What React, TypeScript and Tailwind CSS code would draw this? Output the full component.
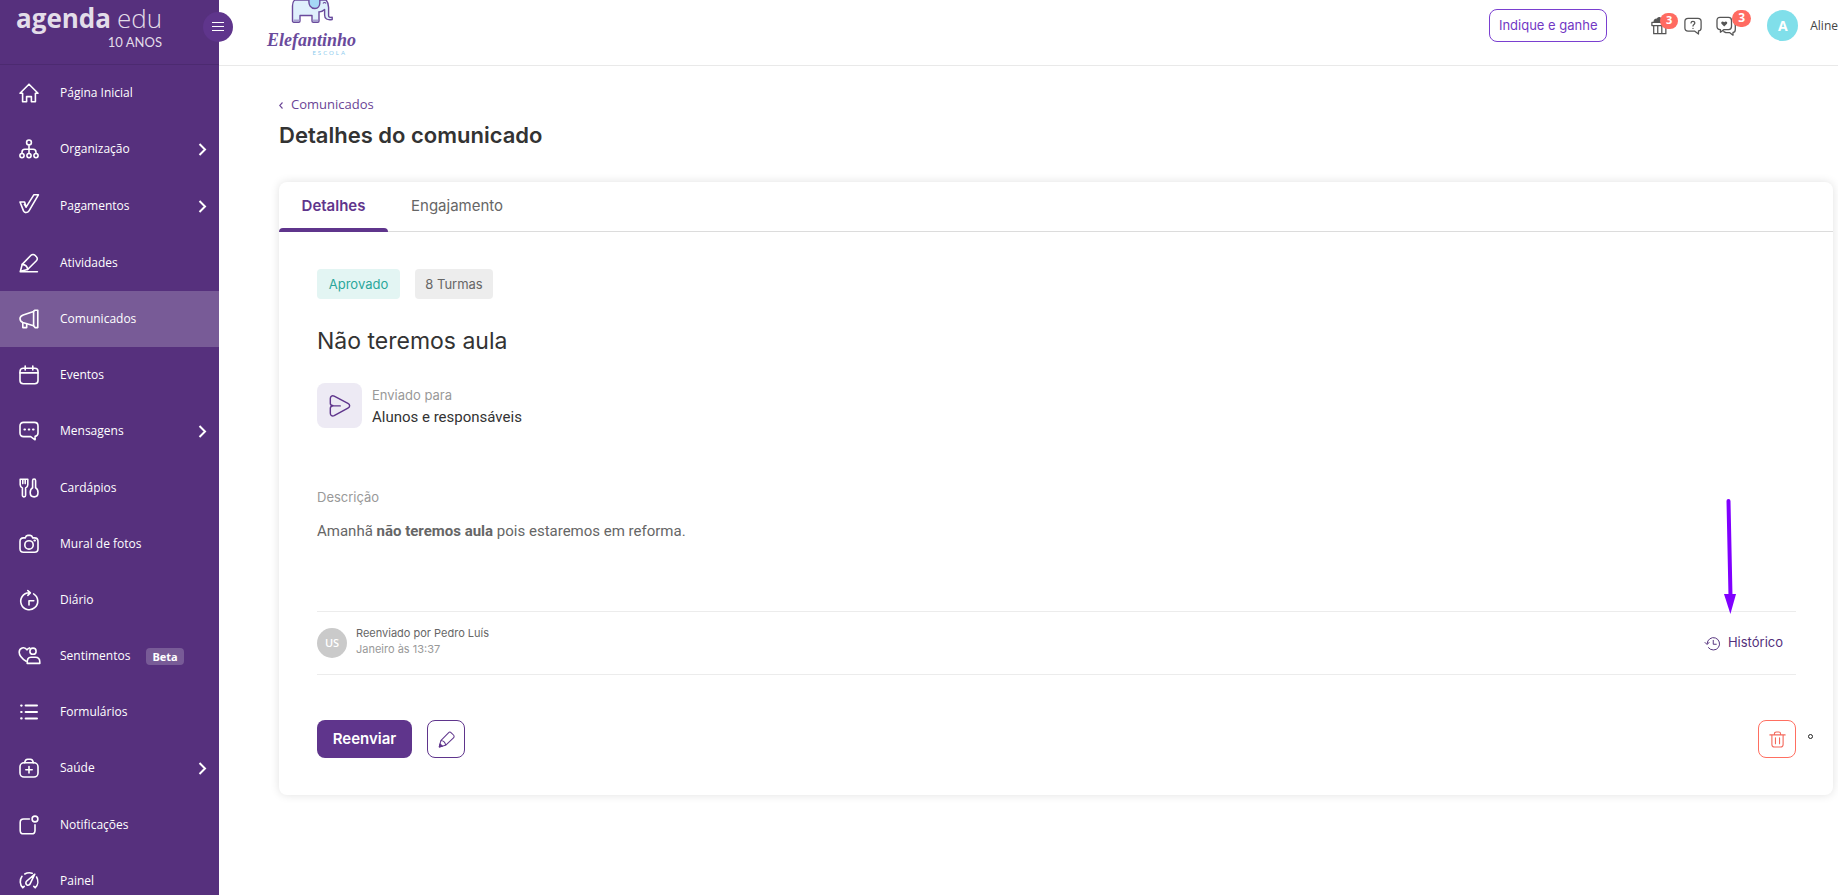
import type { ReactNode } from 'react';

type NavItem = {
  label: string;
  icon: ReactNode;
  hasChildren?: boolean;
  active?: boolean;
  badge?: string;
};

const navItems: NavItem[] = [
  {
    label: 'Página Inicial',
    icon: <path d="M1 10.2 10 1.2l9 9h-2.6v8.6h-4v-5.2H7.6v5.2h-4v-8.6H1Z" />,
  },
  {
    label: 'Organização',
    hasChildren: true,
    icon: (
      <>
        <circle cx="10" cy="3.4" r="2.4" />
        <circle cx="3" cy="16.6" r="2.1" />
        <circle cx="10" cy="16.6" r="2.1" />
        <circle cx="17" cy="16.6" r="2.1" />
        <path d="M10 5.8v8.7M3 14.5v-1.3c0-1.8 1-2.9 2.9-2.9h8.2c1.9 0 2.9 1.1 2.9 2.9v1.3" />
      </>
    ),
  },
  {
    label: 'Pagamentos',
    hasChildren: true,
    icon: <path d="M1 6h4.600l1.500 5.200L14.800-1.200h4.600L10 14.800c-1.400 2.300-4.500 2.400-5.500.1L1 6ZM7.100 11.200 5.400 8.400" />,
  },
  {
    label: 'Atividades',
    icon: (
      <>
        <path d="M1.2 18.800h17.2M1.4 18.300l1.800-6.900 8.800-9.100c1.2-1.2 2.900-1.1 4 0l1.4 1.4c1.2 1.2 1.2 2.800 0 4l-8.800 8.800-7.200 1.800Z" />
        <path d="M3.200 11.400c3.200.2 5.200 2.200 5.400 5.100" />
      </>
    ),
  },
  {
    label: 'Comunicados',
    active: true,
    icon: (
      <>
        <path d="M14.6 2.4 4.2 6.1C2.2 6.8 1 7.7 1 9.600c0 1.700.9 3.200 2.800 3.900l10.800 3.200V2.400Z" />
        <path d="M14.6 2.400 16 1.200h2.800v17.400H16l-1.400-1.900M3.800 13.600v5h3.900v-3.800" />
      </>
    ),
  },
  {
    label: 'Eventos',
    icon: (
      <>
        <rect x="1" y="3.2" width="18" height="15.6" rx="3.2" />
        <path d="M1 7.9h18M6.2 1v4M13.8 1v4" />
      </>
    ),
  },
  {
    label: 'Mensagens',
    hasChildren: true,
    icon: (
      <>
        <path d="M4.6 1.4h10.8c2.4 0 3.6 1.3 3.6 3.6v7c0 1.7-1 3.1-2.9 3.400v3.400l-4.400-3.200H4.600C2.200 15.600 1 14.300 1 12V5c0-2.300 1.200-3.600 3.600-3.600Z" />
        <path d="M5.400 8.600h.6M9.700 8.600h.6M14 8.600h.6" strokeWidth="2" />
      </>
    ),
  },
  {
    label: 'Cardápios',
    icon: (
      <>
        <path d="M1.200 1.200h7.600v5.500c0 1.600-.8 2.600-2.200 3.200v7.300c0 2.200-3.200 2.200-3.200 0V9.900C2 9.300 1.200 8.300 1.200 6.700V1.200ZM3.800 1.200v4.400M6.200 1.200v4.400" />
        <path d="M13.600 2.700c0-2.200 3-2.200 3 0v7.100c1.500.9 2.400 2.700 2.400 4.700 0 2.700-1.600 4.400-3.900 4.400s-3.900-1.700-3.900-4.400c0-2 .9-3.800 2.400-4.700V2.700Z" />
      </>
    ),
  },
  {
    label: 'Mural de fotos',
    icon: (
      <>
        <path d="M6.200 3.900c.5-1.500 1.300-2.500 2.600-2.500h2.400c1.300 0 2.100 1 2.600 2.500h1.700C17.800 3.900 19 5.300 19 7.400v7.400c0 2.200-1.200 3.500-3.500 3.500h-11C2.200 18.300 1 17 1 14.800V7.400c0-2.100 1.200-3.500 3.500-3.500h1.700Z" />
        <circle cx="10" cy="10.900" r="4.200" />
        <path d="M15.400 6.600h.6" strokeWidth="2" />
      </>
    ),
  },
  {
    label: 'Diário',
    icon: (
      <>
        <path d="M14.600 3.900a8.500 8.500 0 1 1-4.600-1.200h1M8.800.6l2.600 2.200-2.600 2.500" />
        <path d="M10 15v-4.300h4.800" />
      </>
    ),
  },
  {
    label: 'Sentimentos',
    badge: 'Beta',
    icon: (
      <>
        <path d="M7.200 15.300C2.500 12.400.2 9.600.2 6.300c0-4.400 5.300-6.400 7.800-2.400.7-1.100 1.500-1.700 2.600-2" />
        <circle cx="14" cy="5.200" r="3.100" />
        <path d="M8.200 17.400c-.2-4.200 1-6.200 3.700-6.200h4.500c2.900 0 4.400 1.600 4.400 4.700v1.500H8.200Z" />
      </>
    ),
  },
  {
    label: 'Formulários',
    icon: (
      <>
        <path d="M6.600 3.600H18M6.600 10H18M6.600 16.400H18" strokeWidth="2" />
        <path d="M2.200 3.600h.4M2.200 10h.4M2.200 16.400h.4" strokeWidth="2.200" />
      </>
    ),
  },
  {
    label: 'Saúde',
    hasChildren: true,
    icon: (
      <>
        <rect x="1" y="4.800" width="18" height="14.200" rx="4" />
        <path d="M5.600 4.800c.4-2.400 1.400-3.600 3-3.600h2.800c1.600 0 2.600 1.200 3 3.600M10 8.600V15M6.800 11.800h6.400" />
      </>
    ),
  },
  {
    label: 'Notificações',
    icon: (
      <>
        <path d="M10.400 4H4.600C2.400 4 1.200 5.200 1.200 7.400v8c0 2.200 1.200 3.400 3.400 3.400h8c2.200 0 3.400-1.200 3.400-3.400V9.800" />
        <circle cx="16" cy="4" r="2.900" />
      </>
    ),
  },
  {
    label: 'Painel',
    icon: (
      <>
        <path d="M3.800 16.800A8.900 8.900 0 0 1 3 5.300M5.800 3a9 9 0 0 1 7.400-.8M17.600 6a8.900 8.900 0 0 1-1.400 10.800M3.800 16.800l1.400-1.400M16.200 16.800l-1.400-1.400" />
        <path d="M15.800 3.200 7.800 10c-1.400 1.400-1.200 3 0 3.800 1.200.8 2.700.4 3.400-1.200l4.600-9.400Z" />
      </>
    ),
  },
];

function Icon({ size = 20, stroke = 1.6, children }: { size?: number; stroke?: number; children: ReactNode }) {
  return (
    <svg
      width={size}
      height={size}
      viewBox="0 0 20 20"
      fill="none"
      stroke="currentColor"
      strokeWidth={stroke}
      strokeLinecap="round"
      strokeLinejoin="round"
      className="shrink-0 overflow-visible"
      aria-hidden="true"
    >
      {children}
    </svg>
  );
}

function Sidebar() {
  return (
    <aside className="relative z-10 w-[219px] shrink-0 bg-[#56307d] text-white">
      <div className="flex h-[65px] flex-col border-b border-[#4c2a70] pl-4">
        <a href="#" className="flex w-[146px] flex-col text-[#e3dde9]">
          <span className="flex items-baseline justify-between font-['Open_Sans',sans-serif] text-[26px] leading-9">
            <span className="font-bold">agenda</span>
            <span className="font-light">edu</span>
          </span>
          <span className="text-right font-[Lato,sans-serif] text-[13px] leading-3">10 ANOS</span>
        </a>
      </div>
      <button
        type="button"
        aria-label="Menu"
        className="absolute top-3 -right-3.5 flex size-[30px] items-center justify-center rounded-full bg-[#5f358c]"
      >
        <svg width="12" height="10" viewBox="0 0 12 10" stroke="white" strokeWidth="1.200">
          <path d="M0 .5h12M0 4.500h12M0 8.500h12" />
        </svg>
      </button>
      <nav>
        <ul>
          {navItems.map((item) => (
            <li key={item.label} className={item.hasChildren ? 'pb-px' : ''}>
              <a
                href="#"
                className={`flex h-14 items-center pr-3 pl-[19px] font-['Open_Sans',sans-serif] text-xs ${item.active ? 'bg-[#785b97]' : ''}`}
              >
                <Icon>{item.icon}</Icon>
                <span className="ml-[21px]">{item.label}</span>
                {item.badge && (
                  <span className="ml-4 rounded bg-[#785b97] px-1.5 text-[11px] leading-[17px] font-bold">{item.badge}</span>
                )}
                {item.hasChildren && (
                  <svg width="9" height="13" viewBox="0 0 9 13" fill="none" stroke="currentColor" strokeWidth="2" className="ml-auto">
                    <path d="m1.500 1 5.500 5.500L1.500 12" />
                  </svg>
                )}
              </a>
            </li>
          ))}
        </ul>
      </nav>
    </aside>
  );
}

function SchoolLogo() {
  return (
    <a href="#" className="flex w-[88px] flex-col items-center pl-px">
      <svg width="42" height="24" viewBox="0 0 42 24" fill="none" stroke="#6a4a9c" strokeWidth="1.400" strokeLinejoin="round" aria-hidden="true">
        <path
          d="M1.500 21V6c0-3 .8-5 2.500-6h31c2 2 2.700 5 2.600 8v7.500c0 1.800 1 2 3.600 1.800v2.200c-5 .8-7.600-.6-7.600-4.500V9.500C32 11 30 12 28 11.800V21c0 .7-.5 1.200-1.200 1.200h-4.600c-.7 0-1.200-.5-1.200-1.200v-5.500H9V21c0 .7-.5 1.200-1.200 1.200H2.700c-.7 0-1.200-.5-1.200-1.200Z"
          fill="#dff0fc"
        />
        <path d="M18 0c-.6 5 1.600 8.500 6 8.500 3 0 4.800-2.500 4.800-5.500V0" fill="#a5d8f6" />
        <path d="M32 3.600c.8-1.500 2.200-1.500 3 0" strokeWidth="1.100" />
        <path d="M2.500 20.300h6M22 20.300h5" stroke="#a99fd0" />
      </svg>
      <span className="mt-1.5 font-['Liberation_Serif',serif] text-lg leading-5 font-bold text-[#6a4a9c] italic">Elefantinho</span>
      <span className="mr-2 self-end font-[Lato,sans-serif] text-[6px] leading-[6px] tracking-[2px] text-[#8ccbee]">ESCOLA</span>
    </a>
  );
}

function CountBadge({ children }: { children: ReactNode }) {
  return (
    <span className="absolute -top-1 left-[9px] flex h-4 w-[18px] items-center justify-center rounded-full bg-[#ff6b61] font-['Open_Sans',sans-serif] text-[11px] font-bold text-white">
      {children}
    </span>
  );
}

function TopBar() {
  return (
    <header className="flex h-[66px] items-start justify-between border-b border-[#e9e9e9] pl-12">
      <SchoolLogo />
      <div className="flex h-[51px] items-center">
        <button
          type="button"
          className="h-[33px] w-[118px] rounded-lg border border-[#7a3fd0] font-[Inter,sans-serif] text-[13px] text-[#7237c4]"
        >
          Indique e ganhe
        </button>
        <button type="button" aria-label="Presentes" className="relative ml-11 text-[#555]">
          <Icon size={18} stroke={1.400}>
            <path d="M1 6h17v3.500H1zM3 9.500h13.500v9H3zM7.500 9.500v9M12 9.500v9" />
            <path d="M3.500 6C3 3.500 5 2 7 2.500 8-.2 11 .5 11.300 3L14 6Z" fill="currentColor" />
          </Icon>
          <CountBadge>3</CountBadge>
        </button>
        <button type="button" aria-label="Ajuda" className="ml-[15px] text-[#555]">
          <Icon size={18} stroke={1.400}>
            <path d="M4.500 1.400h11c2.300 0 3.500 1.200 3.500 3.500v7.200c0 2-1 3.200-2.900 3.400v3.400l-4.500-3.300H4.500C2.200 15.600 1 14.400 1 12.100V4.900c0-2.300 1.200-3.500 3.500-3.500Z" />
            <path d="M7.800 6.600C8 4.200 12.100 4.300 12 6.800c0 1.600-2 1.500-2 3.200M10 12.600v.1" />
          </Icon>
        </button>
        <button type="button" aria-label="Conversas" className="relative ml-3.5 text-[#555]">
          <Icon size={20} stroke={1.300}>
            <path d="M4 1.400h8.500c2 0 3 1 3 3v6.200c0 2-1 3-3 3H8l-3.600 2.600v-2.600C2 13.600 1 12.600 1 10.600V4.400c0-2 1-3 3-3Z" />
            <path d="M18 6.500c1 .7 1.300 1.600 1.300 3v4c0 1.900-.8 2.900-2.300 3v2.700l-3.500-2.600H9.800l-2-1" />
            <path d="M8.200 10.400 5.500 7.700c-1-1.300.8-3.300 2.700-1.500 1.900-1.800 3.800.2 2.800 1.500l-2.800 2.700Z" fill="currentColor" stroke="none" />
          </Icon>
          <span className="absolute -top-1.5 left-4 flex h-[17px] w-[19px] items-center justify-center rounded-full bg-[#ff6b61] font-['Open_Sans',sans-serif] text-xs font-bold text-white">
            3
          </span>
        </button>
        <a href="#" className="ml-[31px] flex items-center gap-3">
          <span className="flex size-[31px] items-center justify-center rounded-full bg-[#80dfea] font-['Open_Sans',sans-serif] text-sm font-bold text-white">
            A
          </span>
          <span className="font-['Open_Sans',sans-serif] text-xs text-[#444]">Aline</span>
        </a>
      </div>
    </header>
  );
}

export default function App() {
  return (
    <div className="flex h-screen overflow-hidden bg-white">
      <Sidebar />
      <div className="min-w-0 flex-1">
        <TopBar />
        <main className="pt-[29px] pr-[5px] pl-[60px]">
          <a href="#" className="flex h-5 w-fit items-center gap-2 font-['Open_Sans',sans-serif] text-[13px] text-[#6a4496]">
            <svg width="4" height="7" viewBox="0 0 4 7" fill="none" stroke="currentColor" strokeWidth="1.100">
              <path d="M3.500.5.700 3.500l2.800 3" />
            </svg>
            Comunicados
          </a>
          <h1 className="mt-1 font-[Inter,sans-serif] text-[22px] leading-8 font-semibold text-[#333]">Detalhes do comunicado</h1>

          <section className="relative mt-[31px] rounded-lg bg-white shadow-[0_0_10px_rgba(0,0,0,0.12)]">
            <div role="tablist" className="flex h-[50px] border-b border-[#dcdcdc] font-[Inter,sans-serif] text-[15px]">
              <button
                type="button"
                role="tab"
                aria-selected="true"
                className="relative w-[109px] font-semibold text-[#5f358c]"
              >
                Detalhes
                <span className="absolute inset-x-0 -bottom-px h-1 rounded-t bg-[#5f358c]" />
              </button>
              <button type="button" role="tab" aria-selected="false" className="px-[23px] text-[#666]">
                Engajamento
              </button>
            </div>

            <div className="pt-[37px] pr-[37px] pb-[37px] pl-[38px]">
              <div className="flex gap-[15px] font-[Inter,sans-serif] text-[13px] leading-[30px]">
                <span className="w-[83px] rounded bg-[#e3f5f3] text-center text-[#2aa79b]">Aprovado</span>
                <span className="w-[78px] rounded bg-[#ededed] text-center text-[#666]">8 Turmas</span>
              </div>

              <h2 className="mt-[26px] font-[Inter,sans-serif] text-[23px] leading-8 text-[#333]">Não teremos aula</h2>

              <div className="mt-[26px] flex items-center gap-2.5">
                <span className="flex size-[45px] items-center justify-center rounded-lg bg-[#edeaf4] text-[#5f358c]">
                  <Icon size={22} stroke={1.300}>
                    <path d="M1.200 7.700V3.200C1.200 1 2.900.2 4.700 1l12.500 6.700c2.100 1.100 2.100 3 0 4.200L4.700 18.800c-1.800.8-3.500 0-3.500-2.200v-4.500c0-1.700 1.300-2.100 2.800-2.300l6.200.1L4 9.800C2.500 9.700 1.200 9.300 1.200 7.700Z" />
                  </Icon>
                </span>
                <div>
                  <p className="font-[Inter,sans-serif] text-[13px] leading-[22px] text-[#999]">Enviado para</p>
                  <p className="font-[Roboto,sans-serif] text-[15px] leading-[22px] text-[#333]">Alunos e responsáveis</p>
                </div>
              </div>

              <p className="mt-[58px] font-[Inter,sans-serif] text-[13px] leading-[22px] text-[#999]">Descrição</p>
              <p className="mt-3 font-[Roboto,sans-serif] text-[15px] leading-[22px] text-[#666]">
                Amanhã <strong>não teremos aula</strong> pois estaremos em reforma.
              </p>

              <div className="mt-[69px] flex h-16 items-center border-y border-[#ececec]">
                <span className="flex size-[30px] items-center justify-center rounded-full bg-[#cacaca] font-['Open_Sans',sans-serif] text-[11px] font-semibold text-white">
                  US
                </span>
                <div className="-mt-1 ml-[9px] font-[Inter,sans-serif] text-[11px] leading-4">
                  <p className="text-[#666]">Reenviado por Pedro Luís</p>
                  <p className="text-[#999]">Janeiro às 13:37</p>
                </div>
                <a href="#" className="relative mr-[13px] ml-auto flex items-center gap-2 font-[Inter,sans-serif] text-[13px] text-[#53307c]">
                  <Icon size={15} stroke={1.300}>
                    <path d="M2.800 10a8.300 8.300 0 1 1 1.700 5.500M0 8.600l2.800 2.800 2.600-2.800M11 5.800V11h4" />
                  </Icon>
                  Histórico
                  {/* callout arrow pointing at the link */}
                  <svg width="14" height="116" viewBox="0 0 14 116" className="absolute right-[46px] bottom-[39px]" aria-hidden="true">
                    <path d="M5.500 3 7.500 98" stroke="#8000ff" strokeWidth="4" strokeLinecap="round" />
                    <path d="M1 96h12L7.400 116Z" fill="#8000ff" />
                  </svg>
                </a>
              </div>

              <div className="mt-[45px] flex items-center gap-[15px]">
                <button type="button" className="h-[38px] w-[95px] rounded-lg bg-[#5f358c] font-[Inter,sans-serif] text-[15px] font-semibold text-white">
                  Reenviar
                </button>
                <button
                  type="button"
                  aria-label="Editar"
                  className="flex size-[38px] items-center justify-center rounded-lg border border-[#5f358c] text-[#5f358c]"
                >
                  <Icon size={17} stroke={1.200}>
                    <path d="m1.500 18.700 1.800-7.400 9-9.200c1-1 2.300-1 3.300 0l2.600 2.600c1 1 1 2.300 0 3.300l-9.300 8.900-7.400 1.800ZM3.300 11.300c3.300.1 5.300 2.200 5.600 5.600" />
                    <path d="m1.500 18.700.9-3.700 2.800 2.800Z" fill="currentColor" />
                  </Icon>
                </button>
                <button
                  type="button"
                  aria-label="Excluir"
                  className="ml-auto flex size-[38px] items-center justify-center rounded-lg border border-[#ff6f61] text-[#f4695c]"
                >
                  <Icon size={17} stroke={1.300}>
                    <path d="M1 4.600h18M3.400 4.600v11.200c0 2 1 3 3 3h7.200c2 0 3-1 3-3V4.600M6.400 4.600V3.200C6.400 2 7.200 1.200 8.400 1.200h3.200c1.200 0 2 .8 2 2v1.400M7.600 8v7M12.400 8v7" />
                  </Icon>
                </button>
              </div>
            </div>
            <span className="absolute right-5 bottom-14 size-[5px] rounded-full border border-[#222]" />
          </section>
        </main>
      </div>
    </div>
  );
}
